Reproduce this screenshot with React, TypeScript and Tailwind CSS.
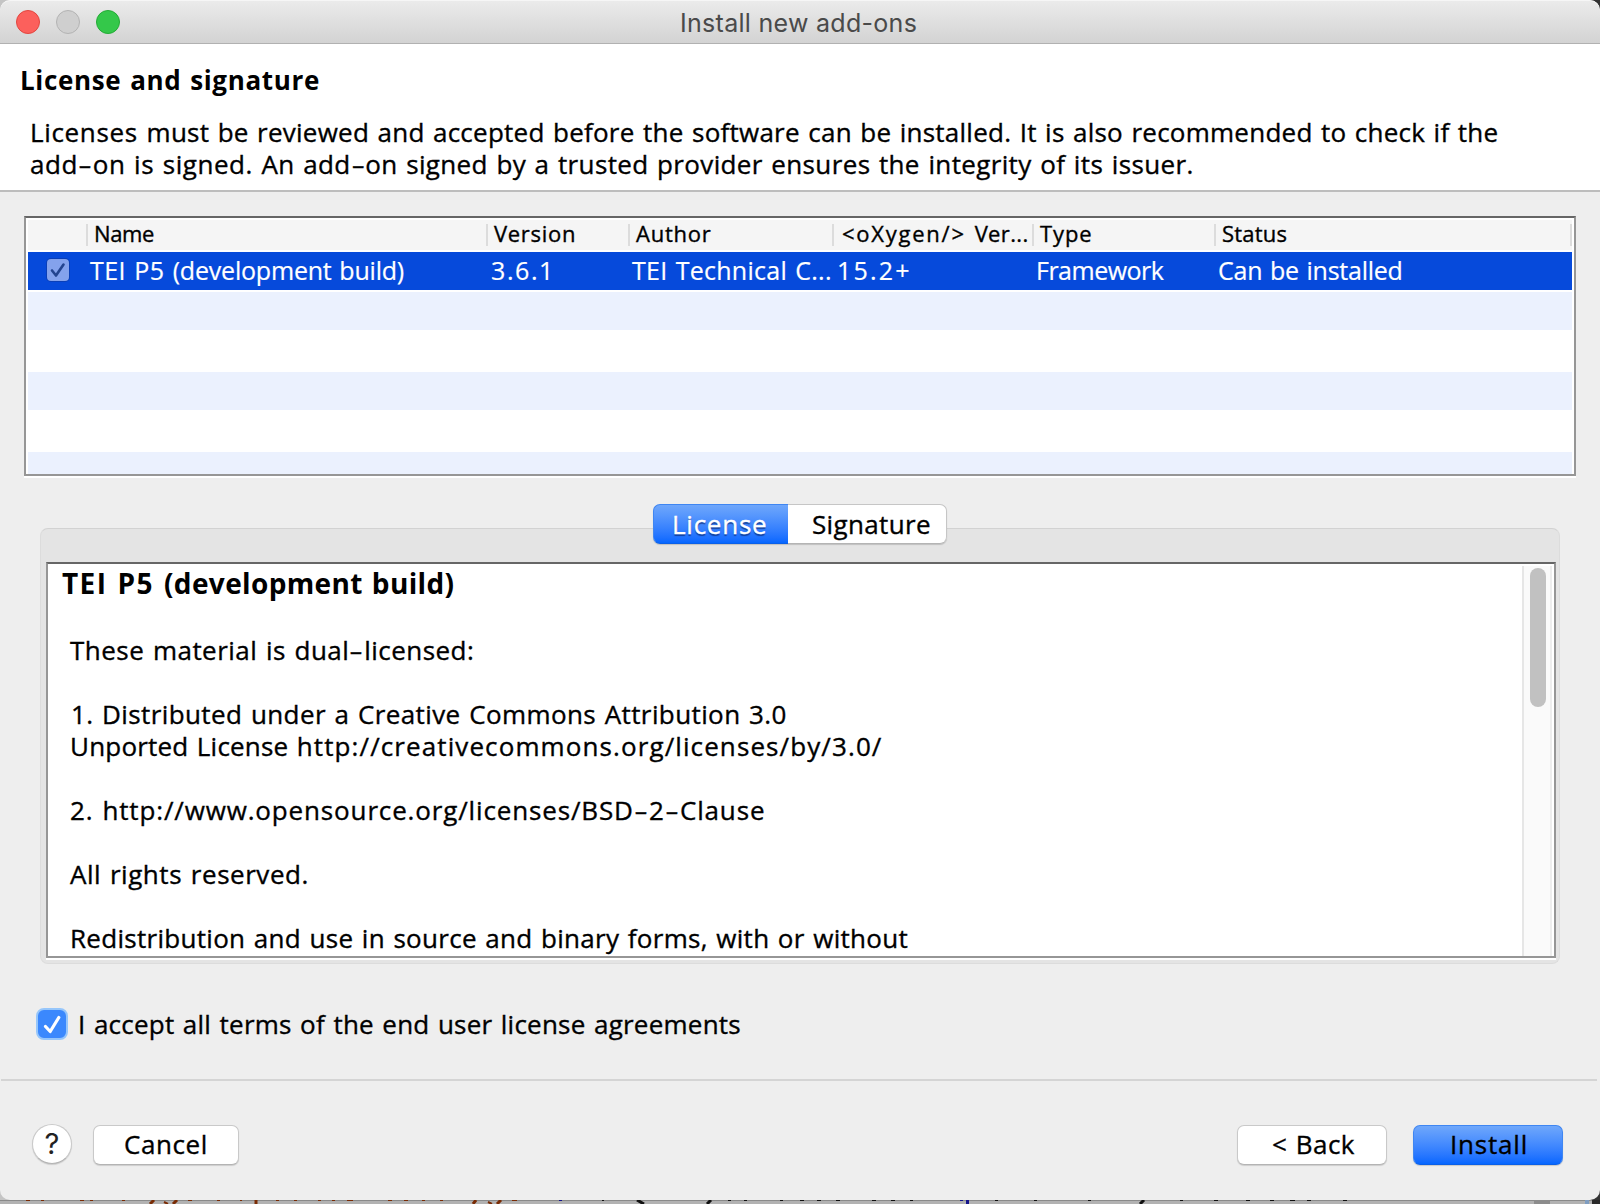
import type { ReactNode } from "react";

const headers: { label: ReactNode; cell: string }[] = [
  { label: "", cell: "w-[60px]" },
  { label: "Name", cell: "w-[400px] pl-[6px] tracking-[-0.4px]" },
  { label: "Version", cell: "w-[142px] pl-[6px] tracking-[0.7px]" },
  { label: "Author", cell: "w-[204px] pl-[6px] tracking-[0.746px]" },
  {
    label: (
      <>
        <span className="tracking-[1.75px]">&lt;oXygen/&gt; </span>
        <span className="tracking-[0.35px]">Ver...</span>
      </>
    ),
    cell: "w-[200px] pl-[8px]",
  },
  { label: "Type", cell: "w-[182px] pl-[6px] tracking-[0.9px]" },
  { label: "Status", cell: "w-[356px] pl-[6px] tracking-[0.207px]" },
];

const addon: { text: ReactNode; cell: string }[] = [
  {
    text: (
      <>
        <span className="tracking-[0.4px]">TEI P5 </span>
        <span className="tracking-[-0.2px]">(development build)</span>
      </>
    ),
    cell: "w-[400px] pl-[2px]",
  },
  { text: "3.6.1", cell: "w-[142px] pl-[3px] tracking-[1.6px]" },
  { text: "TEI Technical C...", cell: "w-[204px] pl-[2px] tracking-[0.27px]" },
  { text: "15.2+", cell: "w-[200px] pl-[3px] tracking-[2.2px]" },
  { text: "Framework", cell: "w-[182px] pl-[2px] tracking-[-0.5px]" },
  { text: "Can be installed", cell: "w-[356px] pl-[2px] tracking-[-0.24px]" },
];

/** Hyphen drawn as a wide dash, as the dialog's typeface does. */
function Dash() {
  return <span className="mx-[3px] inline-block scale-x-[1.6] leading-[18px]">-</span>;
}

function Line({ className = "", children }: { className?: string; children?: ReactNode }) {
  return <p className={`h-8 ${className}`}>{children}</p>;
}

function TitleBar() {
  return (
    <div className="relative flex h-11 shrink-0 items-center rounded-t-[10px] border-t border-b border-t-[#f6f6f6] border-b-[#b1b1b1] bg-linear-to-b from-[#ebebeb] to-[#d3d3d3] pl-4">
      <div className="flex gap-4">
        <span className="size-6 rounded-full border border-[#e2463f] bg-[#fc605c]" />
        <span className="size-6 rounded-full border border-[#b3b3b3] bg-[#cfcfcf]" />
        <span className="size-6 rounded-full border border-[#24ab36] bg-[#34c84a]" />
      </div>
      <div className="ml-[560px] pt-[2px] font-['Inter',sans-serif] text-[25px] leading-[40px] tracking-[0.29px] text-[#4a4a4a] [word-spacing:0px] [-webkit-text-stroke-width:0px]">
        Install new add-ons
      </div>
    </div>
  );
}

function AddonTable() {
  return (
    <div className="mx-6 mt-6 h-[260px] shrink-0 border-2 border-[#969696] border-t-[#666666] bg-white px-[2px] pt-[2px] shadow-[0_2px_0_#ffffff]">
      <div className="flex h-[30px] bg-[#f5f5f5] text-[22px] leading-[27px]">
        {headers.map((h, i) => (
          <div key={i} className={`flex shrink-0 justify-between ${h.cell}`}>
            <span>{h.label}</span>
            <span className="mt-1 h-[22px] w-[2px] bg-[#dcdcdc]" />
          </div>
        ))}
      </div>
      <div className="mt-[2px] flex h-[38px] bg-[#064adb] text-[25px] leading-[37px] text-white [-webkit-text-stroke-width:0.2px]">
        <div className="w-[60px] shrink-0 pt-[7px] pl-[19px]">
          <div className="size-[22px] rounded-[4px] bg-[#84a2ec] shadow-[0_0_0_1px_#0a3fb8]">
            <svg viewBox="0 0 22 22" className="size-[22px]" fill="none" stroke="#23448f" strokeWidth="2.6" strokeLinecap="round" strokeLinejoin="round">
              <path d="M5 11.5 L9 16.5 L16.5 5.5" />
            </svg>
          </div>
        </div>
        {addon.map((a, i) => (
          <div key={i} className={`shrink-0 ${a.cell}`}>
            {a.text}
          </div>
        ))}
      </div>
      <div className="mt-[2px] h-[38px] bg-[#ebf1fe]" />
      <div className="mt-[42px] h-[38px] bg-[#ebf1fe]" />
      <div className="mt-[42px] h-[22px] bg-[#ebf1fe]" />
    </div>
  );
}

function Tabs() {
  return (
    <div className="relative z-10 ml-[653px] mt-[28px] flex h-10 w-[294px] shrink-0 rounded-[7px] shadow-[0_1px_1px_rgba(0,0,0,0.16)]">
      <div className="w-[135px] rounded-l-[7px] border border-r-0 border-[#3f86f2] border-b-[#0a5fe8] bg-linear-to-b from-[#6fa7fb] to-[#0466ff] pl-[18px] leading-[38px] tracking-[0.75px] text-white [text-shadow:0_2px_1px_rgba(0,20,80,0.55)]">
        License
      </div>
      <div className="w-[159px] rounded-r-[7px] border border-l-0 border-[#c6c6c6] border-b-[#b4b4b4] bg-white pl-[24px] leading-[38px] tracking-[0.35px]">
        Signature
      </div>
    </div>
  );
}

function LicensePanel() {
  return (
    <div className="mx-10 -mt-4 h-[436px] shrink-0 rounded-[8px] border border-[#dcdcdc] border-t-[#d2d2d2] bg-[#e4e4e4] px-[5px] pt-[33px]">
      <div className="mr-[-2px] flex h-[396px] w-[1510px] border-2 border-[#969696] border-t-[#666666] bg-white shadow-[0_2px_0_#ffffff]">
        <div className="w-[1474px] shrink-0 pt-[3px] pl-[22px]">
          <h2 className="mb-[35px] -ml-[8px] h-8 text-[28px] font-bold [-webkit-text-stroke-width:0px]">
            <span className="tracking-[1.4px]">TEI P5 </span>
            <span className="tracking-[0.36px]">(development build)</span>
          </h2>
          <Line className="tracking-[0.475px]">
            These material is dual
            <Dash />
            licensed:
          </Line>
          <Line />
          <Line className="pl-px tracking-[0.395px]">1. Distributed under a Creative Commons Attribution 3.0</Line>
          <Line>
            <span className="tracking-[0.2px]">Unported License </span>
            <span className="tracking-[1.1px]">http://creativecommons.org/licenses/by/3.0/</span>
          </Line>
          <Line />
          <Line className="tracking-[0.85px]">
            2. http://www.opensource.org/licenses/BSD
            <Dash />2<Dash />
            Clause
          </Line>
          <Line />
          <Line className="tracking-[0.54px]">All rights reserved.</Line>
          <Line />
          <Line className="tracking-[0.294px]">
            Redistribution and use in source and binary forms, with or without
          </Line>
        </div>
        <div className="mt-[2px] h-[390px] w-[30px] border-x-2 border-l-[#e6e6e6] border-r-[#ededed] bg-[#fafafa] pt-[2px] pl-[6px]">
          <div className="h-[139px] w-4 rounded-full bg-[#c1c1c1]" />
        </div>
      </div>
    </div>
  );
}

const button =
  "h-10 rounded-[7px] border border-[#c9c9c9] border-b-[#b4b4b4] bg-white leading-[36px] shadow-[0_1px_1px_rgba(0,0,0,0.14)]";

function Footer() {
  return (
    <div className="flex pt-[43px] pl-8">
      <div className="size-10 rounded-full border border-[#c9c9c9] border-b-[#b4b4b4] bg-white text-center font-['Inter',sans-serif] text-[29px] leading-[38px] text-[#222222] shadow-[0_1px_1px_rgba(0,0,0,0.14)] [-webkit-text-stroke-width:0px]">
        ?
      </div>
      <div className={`mt-px ml-[21px] w-[146px] pl-[30px] tracking-[0.6px] ${button}`}>Cancel</div>
      <div className={`mt-px ml-[998px] w-[150px] pl-[34px] tracking-[0.4px] ${button}`}>&lt; Back</div>
      <div className="mt-px ml-[26px] h-10 w-[150px] rounded-[7px] border border-[#3f86f2] border-b-[#0a5fe8] bg-linear-to-b from-[#6fa7fb] to-[#0466ff] pl-[36px] leading-[36px] tracking-[0.8px] shadow-[0_1px_1px_rgba(0,0,0,0.16)]">
        Install
      </div>
    </div>
  );
}

/** Sliver of the editor behind the dialog: glyph bottoms peeking out under its lower edge. */
function EditorSliver() {
  return (
    <svg className="absolute bottom-0 left-0" width="1600" height="4" fill="none">
      <rect width="1600" height="4" fill="#b2b2b2" />
      <rect width="1600" height="1" fill="#8a8a8a" />
      <g stroke="#7a2c05" strokeWidth="1">
        <path d="M26 .5h4M41 .5h3M80 .5h4M90 .5h3M122 .5h3M188 .5h4M217 .5h3M240 .5h2M276 .5h3M294 .5h3M318 .5h3M332 .5h3M347 .5h6M388 .5h4M404 .5h4M422 .5h3M440 .5h3M512 .5h5" />
        <path d="M154 0L150 4M177 0L173 4M476 0L473 4M501 0L497 4" strokeWidth="3" />
        <path d="M164 2L168 4M488 2L492 4" strokeWidth="2" />
        <path d="M256 0V4" strokeWidth="3" />
      </g>
      <path d="M967.500 0V4" stroke="#14148c" strokeWidth="3" />
      <path d="M559 .5h3M960 .5h3" stroke="#14148c" />
      <g stroke="#111111">
        <path d="M637 0L644 4M711 0L707 4M1144 0L1140 4" strokeWidth="3" />
        <path d="M602 .5h2M728 .5h3M744 .5h3M780 .5h3M800 .5h4M817 .5h4M836 .5h4M872 .5h4M891 .5h4M910 .5h3M995 .5h3M1034 .5h3M1088 .5h3M1180 .5h3M1214 .5h4M1246 .5h4M1270 .5h4M1290 .5h5M1307 .5h4M1343 .5h4" />
      </g>
      <rect x="1534" width="16" height="4" fill="#8c8c8c" />
      <rect x="1585" width="4" height="4" fill="#7f9dc0" />
      <rect x="1592" width="8" height="4" fill="#2a2a2a" />
    </svg>
  );
}

export default function App() {
  return (
    <div className="relative h-[1204px] w-[1600px] overflow-hidden bg-linear-to-r from-[#c4c4c4] from-50% to-[#333333] to-50% font-['Open_Sans','Noto_Sans',sans-serif] text-[26px] leading-8 whitespace-nowrap text-black [word-spacing:1.45px] [-webkit-text-stroke-width:0.35px]">
      <EditorSliver />
      <div className="relative flex h-[1200px] flex-col overflow-hidden rounded-[10px] bg-[#eeeeee]">
        <TitleBar />
        <div className="h-[148px] shrink-0 border-b-2 border-[#bdbdbd] bg-white pt-5 pl-5">
          <h1 className="font-bold tracking-[0.65px] [-webkit-text-stroke-width:0px]">License and signature</h1>
          <p className="mt-5 pl-[10px] tracking-[0.242px]">
            <span className="tracking-[0.65px]">Licenses </span>
            must be reviewed and accepted before the software can be installed. It is also recommended to check if the
          </p>
          <p className="pl-[10px]">
            <span className="tracking-[0.52px]">
              add
              <Dash />
              on is signed.{" "}
            </span>
            <span className="tracking-[0.36px]">
              An add
              <Dash />
              on signed by a trusted provider ensures the integrity of its issuer.
            </span>
          </p>
        </div>
        <AddonTable />
        <Tabs />
        <LicensePanel />
        <div className="mt-11 flex shrink-0 pl-9">
          <div className="size-8 rounded-[8px] border-2 border-[#96c6fb] bg-[#3b88fd]">
            <svg viewBox="0 0 28 28" className="size-7" fill="none" stroke="#ffffff" strokeWidth="3.2" strokeLinecap="round" strokeLinejoin="round">
              <path d="M7.500 16.500 L12.200 21.500 L20.800 7.500" />
            </svg>
          </div>
          <span className="ml-[10px] tracking-[0.23px]">I accept all terms of the end user license agreements</span>
        </div>
        <div className="mt-[39px] mr-[3px] ml-px h-[2px] shrink-0 bg-[#d4d4d4]" />
        <Footer />
      </div>
    </div>
  );
}
